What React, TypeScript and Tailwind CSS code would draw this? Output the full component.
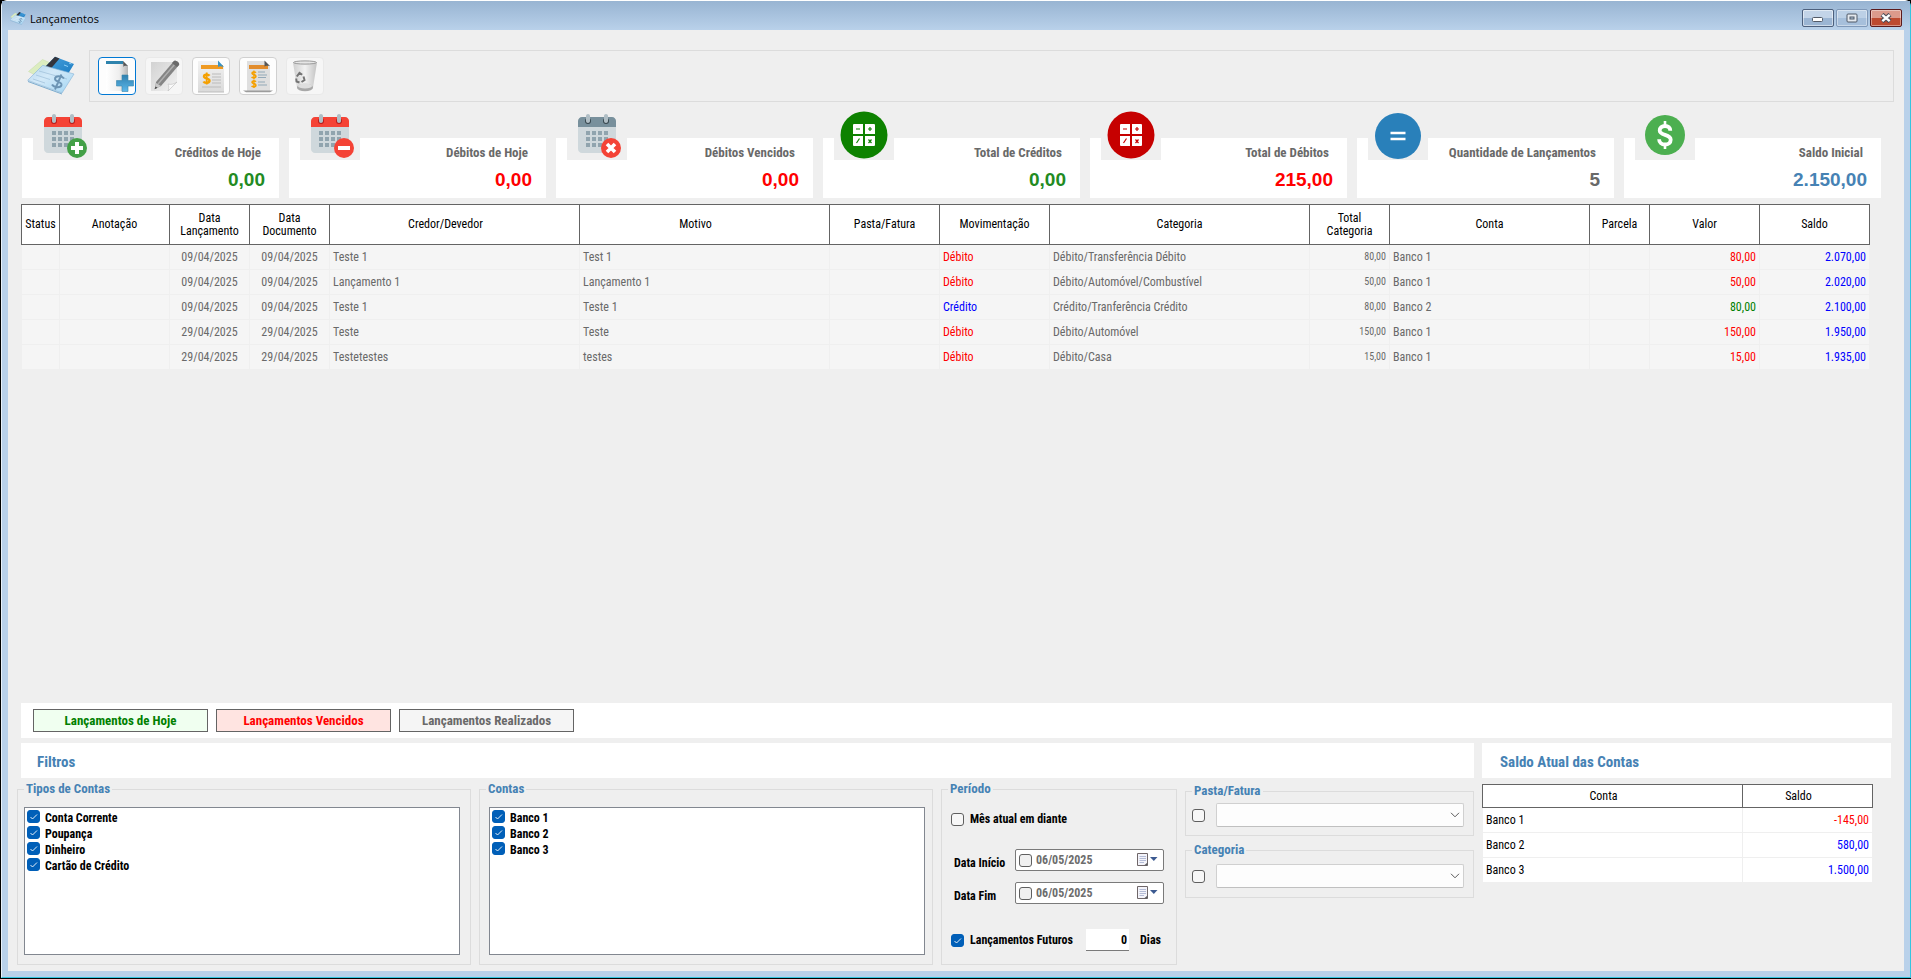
import { useId, type ReactNode } from "react";

const CONDENSED = "font-['Roboto_Condensed','Roboto','Liberation_Sans',sans-serif]";

/* ---------- icons ---------- */

function LogoIcon({ className }: { className: string }) {
  return (
    <svg viewBox="0 0 48 40" className={className} aria-hidden="true">
      <defs>
        <linearGradient id="cheque" x1="0" y1="0" x2="1" y2="1">
          <stop offset="0" stopColor="#b4d6ee" />
          <stop offset="0.4" stopColor="#d3e9f8" />
          <stop offset="0.8" stopColor="#b2dcf5" />
          <stop offset="1" stopColor="#8cc0e4" />
        </linearGradient>
        <linearGradient id="card" x1="0" y1="0" x2="1" y2="1">
          <stop offset="0" stopColor="#4aa3de" />
          <stop offset="1" stopColor="#1c7cc2" />
        </linearGradient>
      </defs>
      <path d="M1.500 15.500 15.500 3.500 28 9 12 21z" fill="#dcedc0" stroke="#c4dba4" strokeWidth="0.5" />
      <path d="M28 .8 47 8 41 18 18 11z" fill="url(#card)" />
      <path d="M18 11 28 .8l4.500 1.700L23.500 13z" fill="#33343c" />
      <path d="M37 9l4 1.500M42 7l2.500 1" stroke="#8fd0f8" strokeWidth="1" />
      <path d="M.7 24.300 15.700 9.300 47 18 35 37z" fill="url(#cheque)" stroke="#86b4d6" strokeWidth="0.6" />
      <path d="M12 15l28 8M9 19l14 4.500M6 23l12 4" stroke="#9dbfd9" strokeWidth="0.7" />
      <path d="M1 25.500l34 12.500" stroke="#5f9cc7" strokeWidth="0.8" />
      <path
        d="M37 22.500c-2-3-9-3-9 .5 0 3 7 2.500 6.500 6-.5 3-7.500 3-9.500-.5M34.500 18.500l-6.500 15"
        fill="none"
        stroke="#6c94b4"
        strokeWidth="1.900"
      />
    </svg>
  );
}

function NewIcon() {
  return (
    <svg viewBox="0 0 36 36" className="size-9" aria-hidden="true">
      <defs>
        <linearGradient id="pg" x1="0" y1="0" x2="1" y2="0">
          <stop offset="0" stopColor="#ffffff" />
          <stop offset="0.6" stopColor="#eeeeee" />
          <stop offset="1" stopColor="#b4b4b4" />
        </linearGradient>
        <linearGradient id="plus" x1="0" y1="0" x2="0" y2="1">
          <stop offset="0" stopColor="#2f7fae" />
          <stop offset="1" stopColor="#5db8ea" />
        </linearGradient>
      </defs>
      <path d="M7 3h17l5 5v25H7z" fill="url(#pg)" />
      <path d="M7 3h17v3H7z" fill="#2e83ad" />
      <path d="M24 3l5 5c-2.500-.5-4-.5-4.500 1z" fill="#555" />
      <path d="M23 17h6v5.500h5.500v5.500H29v5.500h-6V28h-5.500v-5.500H23z" fill="url(#plus)" stroke="#3b86ad" strokeWidth="0.6" />
    </svg>
  );
}

function EditIcon() {
  return (
    <svg viewBox="0 0 36 36" className="size-9" aria-hidden="true">
      <defs>
        <linearGradient id="note" x1="0" y1="0" x2="1" y2="1">
          <stop offset="0" stopColor="#d2d2d2" />
          <stop offset="1" stopColor="#f2f2f2" />
        </linearGradient>
      </defs>
      <path d="M5 4h26v20l-8 9H5z" fill="url(#note)" />
      <path d="M31 24l-9 9c1-3 1-5 0-7 3 1 6 0 9-2z" fill="#fafafa" stroke="#bdbdbd" strokeWidth="0.6" />
      <path d="M28 3c2-1 6 2 5 4L15 28l-6 3 1-7z" fill="#858585" />
      <path d="M29 6L12 26" stroke="#b0b0b0" strokeWidth="1.4" />
      <path d="M28 3c2-1 6 2 5 4l-2 2-5-4z" fill="#6a6a6a" />
      <path d="M10 25l5 3-6 3z" fill="#c9c9c9" />
      <path d="M9.500 28.500l2 1.200-3 1.600z" fill="#444" />
    </svg>
  );
}

function DollarMark({ x, y, s }: { x: number; y: number; s: number }) {
  return (
    <g transform={`translate(${x} ${y}) scale(${s})`} fill="none" stroke="#f5a000" strokeWidth="2.4">
      <path d="M7 3.200C6 1.800 1.500 1.600 1.500 4S7 5.500 7 8.200 2 10.800 1 9" />
      <path d="M4.200 0v12" strokeWidth="1.8" />
    </g>
  );
}

function ReceiptIcon() {
  return (
    <svg viewBox="0 0 36 36" className="size-9" aria-hidden="true">
      <defs>
        <linearGradient id="sheet" x1="0" y1="0" x2="0" y2="1">
          <stop offset="0" stopColor="#f2f2f2" />
          <stop offset="1" stopColor="#dadada" />
        </linearGradient>
      </defs>
      <path d="M5 3h20l6 6v25H5z" fill="url(#sheet)" />
      <path d="M5 34h26" stroke="#bdbdbd" />
      <path d="M8 7h22v4H8z" fill="#ef9a22" />
      <path d="M25 2.500l6 6.500c-3-1-5-1-6 0z" fill="#3a93c4" />
      <DollarMark x={9.500} y={14.500} s={1} />
      <path d="M19 16h9M19 19h9M19 22h9M19 25h9M9 29h19" stroke="#bcbcbc" strokeWidth="1.200" />
    </svg>
  );
}

function StatementIcon() {
  return (
    <svg viewBox="0 0 36 36" className="size-9" aria-hidden="true">
      <path d="M7 3h18l5 5v25H7z" fill="#dfdfdf" />
      <path d="M3 32.500h30l-3 1.800H6z" fill="#9c9c9c" />
      <path d="M9 7h19v4H9z" fill="#e28c2c" />
      <path d="M24.500 2.500L30 8c-3-.5-4.500-.5-5.500.5z" fill="#555" />
      <DollarMark x={11} y={12.500} s={0.7} />
      <DollarMark x={11} y={21.500} s={0.7} />
      <path d="M18 14h7M18 17h9M18 19.500h8M18 24h7M18 27h9" stroke="#94a9b8" strokeWidth="1.100" />
    </svg>
  );
}

function TrashIcon() {
  return (
    <svg viewBox="0 0 36 36" className="size-9" aria-hidden="true">
      <defs>
        <linearGradient id="bin" x1="0" y1="0" x2="1" y2="0">
          <stop offset="0" stopColor="#cfcfcf" />
          <stop offset="0.5" stopColor="#f2f2f2" />
          <stop offset="1" stopColor="#c2c2c2" />
        </linearGradient>
      </defs>
      <path d="M6 4.500l4 25c1 4 15 4 16 0l4-25z" fill="url(#bin)" />
      <ellipse cx="18" cy="4.500" rx="11.500" ry="1.600" fill="#e6e6e6" stroke="#9a9a9a" />
      <ellipse cx="18" cy="29.500" rx="8" ry="3.800" fill="#a8a8a8" />
      <ellipse cx="18" cy="28" rx="7" ry="2.600" fill="#dedede" />
      <path
        d="M9.800 18.500l2.700-3.700 2.700 2M16.500 18.500l1 3.500-3 2M12.500 24.500l-3-1-.3-3"
        fill="none"
        stroke="#747474"
        strokeWidth="2"
      />
    </svg>
  );
}

type Badge = "plus" | "minus" | "cross";

function CalendarIcon({ badge }: { badge: Badge }) {
  const muted = badge === "cross";
  return (
    <svg viewBox="0 0 48 48" className="size-12" aria-hidden="true">
      <path d="M5 38V14h38v24c0 2.200-1.800 4-4 4H9c-2.200 0-4-1.800-4-4z" fill="#cfd8dc" />
      <path d="M43 10v6H5v-6c0-2.200 1.800-4 4-4h30c2.200 0 4 1.800 4 4z" fill={muted ? "#78909c" : "#f44336"} />
      <circle cx="33" cy="10" r="3" fill={muted ? "#37474f" : "#b71c1c"} />
      <circle cx="15" cy="10" r="3" fill={muted ? "#37474f" : "#b71c1c"} />
      <path
        d="M33 3c-1.100 0-2 .9-2 2v5c0 1.100.9 2 2 2s2-.9 2-2V5c0-1.100-.9-2-2-2zM15 3c-1.100 0-2 .9-2 2v5c0 1.100.9 2 2 2s2-.9 2-2V5c0-1.100-.9-2-2-2z"
        fill="#b0bec5"
      />
      <path
        d="M13 20h4v4h-4zM19 20h4v4h-4zM25 20h4v4h-4zM31 20h4v4h-4zM13 26h4v4h-4zM19 26h4v4h-4zM25 26h4v4h-4zM31 26h4v4h-4zM13 32h4v4h-4zM19 32h4v4h-4zM25 32h4v4h-4z"
        fill="#90a4ae"
      />
      <circle cx="38" cy="37" r="10" fill={badge === "plus" ? "#43a047" : "#f44336"} />
      {badge === "plus" && <path d="M36 31h4v4h4v4h-4v4h-4v-4h-4v-4h4z" fill="#fff" />}
      {badge === "minus" && <path d="M32 35h12v4H32z" fill="#fff" />}
      {badge === "cross" && <path d="M34 33l8 8M42 33l-8 8" stroke="#fff" strokeWidth="3.600" />}
    </svg>
  );
}

function CalcIcon({ fill }: { fill: string }) {
  return (
    <svg viewBox="0 0 48 48" className="size-12" aria-hidden="true">
      <circle cx="24" cy="24" r="23.500" fill={fill} />
      <path
        d="M14 13h9v10H13v-9q0-1 1-1zM25 13h9q1 0 1 1v9H25zM13 25h10v10h-9q-1 0-1-1zM25 25h10v9q0 1-1 1h-9z"
        fill="#fff"
      />
      <path
        d="M16 18h4M28 18h4M30 16v4M16.500 32l3-4.500M28.500 28.500l3 3.500M31.500 28.500l-3 3.500"
        stroke={fill}
        strokeWidth="1.200"
      />
    </svg>
  );
}

function EqualsIcon() {
  return (
    <svg viewBox="0 0 48 48" className="size-12" aria-hidden="true">
      <circle cx="24" cy="25" r="23" fill="#2980ba" />
      <path d="M16.500 22h15M16.500 28h15" stroke="#fff" strokeWidth="2.500" />
    </svg>
  );
}

function DollarIcon() {
  return (
    <svg viewBox="0 0 48 48" className="size-12" aria-hidden="true">
      <circle cx="24" cy="24" r="20" fill="#4caf50" />
      <path
        d="M29.300 19.800c0-3-2-4.800-5.300-4.800s-5.300 1.800-5.300 4.500c0 5.400 11 3.400 11 9.200 0 3-2.300 4.800-5.700 4.800s-5.900-2-5.900-5.300"
        fill="none"
        stroke="#fff"
        strokeWidth="3.800"
      />
      <path d="M24 10v5M24 33v5" stroke="#fff" strokeWidth="2.600" />
    </svg>
  );
}

function DropCalendarIcon() {
  return (
    <svg viewBox="0 0 22 14" className="h-3.5 w-[22px]" aria-hidden="true">
      <path d="M.5.500h10v12h-10z" fill="#f4f4fa" stroke="#6f6668" />
      <path d="M2.500 3.500h6.500M2.500 5.500h6.500M2.500 7.500h6.500M2.500 9.500h4.500" stroke="#b4bcd6" />
      <path d="M7 12.500l3.500-3v3z" fill="#5c5c60" />
      <path d="M13 4h7.500l-3.700 4z" fill="#3c5a91" />
    </svg>
  );
}

/* ---------- building blocks ---------- */

function CheckBox({ id, checked, label, tone = "bg-white" }: { id: string; checked?: boolean; label?: string; tone?: string }) {
  return (
    <span className="relative grid size-[13px] shrink-0">
      <input
        id={id}
        type="checkbox"
        aria-label={label}
        defaultChecked={checked}
        className={`peer col-start-1 row-start-1 size-[13px] appearance-none rounded-[3px] border border-[#5f5f5f] ${tone} checked:border-[#005fb8] checked:bg-[#005fb8]`}
      />
      <svg viewBox="0 0 13 13" className="pointer-events-none invisible col-start-1 row-start-1 size-[13px] peer-checked:visible" aria-hidden="true">
        <path d="M3.500 7l2 2 4.500-4.500" fill="none" stroke="#fff" strokeWidth="0.9" />
      </svg>
    </span>
  );
}

function GroupBox({ title, className = "", children }: { title: string; className?: string; children: ReactNode }) {
  return (
    <fieldset className={`min-w-0 border border-[#dcdcdc] ${className}`}>
      <legend className="ml-1.5 px-0.5 text-[13px] leading-4 font-bold text-[#4682b4]">{title}</legend>
      {children}
    </fieldset>
  );
}

function CheckList({ items }: { items: string[] }) {
  const base = useId();
  return (
    <ul className="h-[148px] border border-[#828790] bg-white px-0.5 pt-0.5">
      {items.map((item, i) => (
        <li key={item} className="flex h-4 items-start gap-[5px]">
          <CheckBox id={`${base}-${i}`} checked />
          <label htmlFor={`${base}-${i}`} className="text-xs leading-4 font-bold text-black">
            {item}
          </label>
        </li>
      ))}
    </ul>
  );
}

function DateField({ label }: { label: string }) {
  const id = useId();
  return (
    <div className="flex h-[22px] items-center">
      <label htmlFor={id} className="w-[61px] pt-1.5 text-xs leading-4 font-bold text-black">
        {label}
      </label>
      <div className="flex h-[22px] min-w-0 flex-1 items-center rounded-[2px] border border-[#7a7a7a] bg-white pr-1 pl-[3px]">
        <CheckBox id={`${id}-on`} label={`Usar ${label}`} tone="bg-[#f0f0f0]" />
        <input id={id} defaultValue="06/05/2025" className="ml-1 w-0 min-w-0 flex-1 text-xs leading-4 font-bold text-[#6d6d6d] outline-none" />
        <button type="button" aria-label={`Abrir calendário de ${label}`}>
          <DropCalendarIcon />
        </button>
      </div>
    </div>
  );
}

function ComboGroup({ title, pad }: { title: string; pad: string }) {
  const id = useId();
  return (
    <GroupBox title={title}>
      <div className={`flex items-center gap-[11px] pr-[9px] pl-1.5 ${pad}`}>
        <CheckBox id={id} label={`Filtrar por ${title}`} tone="bg-[#f7f7f7]" />
        <div className="grid min-w-0 flex-1 items-center">
          <select
            aria-label={title}
            className="col-start-1 row-start-1 h-6 w-full appearance-none rounded-[2px] border border-[#d0d0d0] border-b-[#c0c0c0] bg-[#fdfdfd]"
          >
            <option value=""></option>
          </select>
          <svg viewBox="0 0 10 6" className="pointer-events-none col-start-1 row-start-1 mr-1 h-1.5 w-2.5 justify-self-end" aria-hidden="true">
            <path d="M1 .8l4 4 4-4" fill="none" stroke="#5a5a5a" />
          </svg>
        </div>
      </div>
    </GroupBox>
  );
}

/* ---------- data ---------- */

const CARDS: { title: string; value: string; color: string; icon: ReactNode }[] = [
  { title: "Créditos de Hoje", value: "0,00", color: "text-[#228b22]", icon: <CalendarIcon badge="plus" /> },
  { title: "Débitos de Hoje", value: "0,00", color: "text-[#ff0000]", icon: <CalendarIcon badge="minus" /> },
  { title: "Débitos Vencidos", value: "0,00", color: "text-[#ff0000]", icon: <CalendarIcon badge="cross" /> },
  { title: "Total de Créditos", value: "0,00", color: "text-[#228b22]", icon: <CalcIcon fill="#0d8200" /> },
  { title: "Total de Débitos", value: "215,00", color: "text-[#ff0000]", icon: <CalcIcon fill="#c60000" /> },
  { title: "Quantidade de Lançamentos", value: "5", color: "text-[#696969]", icon: <EqualsIcon /> },
  { title: "Saldo Inicial", value: "2.150,00", color: "text-[#4682b4]", icon: <DollarIcon /> },
];

const COLUMNS: { title: string; layout: string }[] = [
  { title: "Status", layout: "w-[38px] px-0" },
  { title: "Anotação", layout: "w-[110px] px-0" },
  { title: "Data Lançamento", layout: "w-[80px] px-2" },
  { title: "Data Documento", layout: "w-[80px] px-2" },
  { title: "Credor/Devedor", layout: "w-[250px] pr-[18px]" },
  { title: "Motivo", layout: "w-[250px] pr-[18px]" },
  { title: "Pasta/Fatura", layout: "w-[110px] px-0" },
  { title: "Movimentação", layout: "w-[110px] px-0" },
  { title: "Categoria", layout: "w-[260px] px-0" },
  { title: "Total Categoria", layout: "w-[80px] px-3" },
  { title: "Conta", layout: "w-[200px] px-0" },
  { title: "Parcela", layout: "w-[60px] px-0" },
  { title: "Valor", layout: "w-[110px] px-0" },
  { title: "Saldo", layout: "w-[110px] px-0" },
];

const ROWS = [
  { date: "09/04/2025", party: "Teste 1", reason: "Test 1", kind: "Débito", category: "Débito/Transferência Débito", total: "80,00", account: "Banco 1", value: "80,00", balance: "2.070,00" },
  { date: "09/04/2025", party: "Lançamento 1", reason: "Lançamento 1", kind: "Débito", category: "Débito/Automóvel/Combustível", total: "50,00", account: "Banco 1", value: "50,00", balance: "2.020,00" },
  { date: "09/04/2025", party: "Teste 1", reason: "Teste 1", kind: "Crédito", category: "Crédito/Tranferência Crédito", total: "80,00", account: "Banco 2", value: "80,00", balance: "2.100,00" },
  { date: "29/04/2025", party: "Teste", reason: "Teste", kind: "Débito", category: "Débito/Automóvel", total: "150,00", account: "Banco 1", value: "150,00", balance: "1.950,00" },
  { date: "29/04/2025", party: "Testetestes", reason: "testes", kind: "Débito", category: "Débito/Casa", total: "15,00", account: "Banco 1", value: "15,00", balance: "1.935,00" },
];

const BALANCES = [
  { account: "Banco 1", value: "-145,00", color: "text-[#ff0000]" },
  { account: "Banco 2", value: "580,00", color: "text-[#0000ff]" },
  { account: "Banco 3", value: "1.500,00", color: "text-[#0000ff]" },
];

const TOOLS: { label: string; icon: ReactNode; style: string; disabled?: boolean }[] = [
  { label: "Novo", icon: <NewIcon />, style: "border-[#0078d4] bg-[#fdfdfd]" },
  { label: "Editar", icon: <EditIcon />, style: "border-[#e9e9e9] bg-[#f6f6f6]", disabled: true },
  { label: "Recibo", icon: <ReceiptIcon />, style: "border-[#d0d0d0] bg-[#fdfdfd]" },
  { label: "Extrato", icon: <StatementIcon />, style: "border-[#d0d0d0] bg-[#fdfdfd]" },
  { label: "Excluir", icon: <TrashIcon />, style: "border-[#e9e9e9] bg-[#f6f6f6]", disabled: true },
];

/* ---------- sections ---------- */

function TitleBar() {
  return (
    <header className="flex h-[29px] items-start bg-linear-to-b from-[#98b4d2] to-[#b9d1ea] pr-2 pl-2">
      <LogoIcon className="mt-2.5 mr-1 h-[15px] w-4" />
      <h1 className="mt-2 flex-1 font-['Open_Sans','Noto_Sans',sans-serif] text-[11px] leading-5 text-black">Lançamentos</h1>
      <div className="mt-2 flex gap-0.5">
        <button
          type="button"
          aria-label="Minimizar"
          className="grid h-[18px] w-8 place-items-center rounded-[2px] border border-[#4d607d] bg-linear-to-b from-[#c3d4e8] from-50% to-[#9bb5d3] to-50% inset-ring inset-ring-white/50"
        >
          <svg viewBox="0 0 12 6" className="mt-1 h-1.5 w-3" aria-hidden="true">
            <rect x="0.5" y="0.5" width="10" height="4" rx="1" fill="#fff" stroke="#535b68" />
          </svg>
        </button>
        <button
          type="button"
          aria-label="Maximizar"
          className="grid h-[18px] w-8 place-items-center rounded-[2px] border border-[#7f98b8] bg-linear-to-b from-[#bcd0e6] from-50% to-[#a6bfdb] to-50% inset-ring inset-ring-white/40"
        >
          <svg viewBox="0 0 12 10" className="h-2.5 w-3" aria-hidden="true">
            <rect x="1" y="1" width="10" height="8" rx="1" fill="#e4e9ef" stroke="#4e5866" />
            <rect x="4" y="4" width="4" height="2" fill="#b4c8de" stroke="#4e5866" />
          </svg>
        </button>
        <button
          type="button"
          aria-label="Fechar"
          className="grid h-[18px] w-8 place-items-center rounded-[2px] border border-[#5b1a1c] bg-linear-to-b from-[#dc9a8c] from-50% to-[#bd4a30] to-50% inset-ring inset-ring-white/40"
        >
          <svg viewBox="0 0 12 10" className="h-2.5 w-3" aria-hidden="true">
            <path d="M2 1.500l8 7M10 1.500l-8 7" stroke="#4c4c58" strokeWidth="4.400" />
            <path d="M2.300 1.800l7.400 6.400M9.700 1.800L2.300 8.200" stroke="#fff" strokeWidth="2.400" />
          </svg>
        </button>
      </div>
    </header>
  );
}

function EntriesTable() {
  const cell = "h-[25px] border border-[#efefef] px-[3px] py-0 leading-4 whitespace-nowrap";
  return (
    <table className="w-full table-fixed border-collapse bg-[#f5f5f5] text-xs text-[#696969]">
      <thead>
        <tr className="h-10 bg-white text-black">
          {COLUMNS.map((c) => (
            <th key={c.title} scope="col" className={`border border-[#646464] py-0 text-center leading-[13px] font-normal ${c.layout}`}>
              {c.title}
            </th>
          ))}
        </tr>
      </thead>
      <tbody>
        {ROWS.map((r, i) => (
          <tr key={i}>
            <td className={cell} />
            <td className={cell} />
            <td className={`${cell} text-center`}>{r.date}</td>
            <td className={`${cell} text-center`}>{r.date}</td>
            <td className={cell}>{r.party}</td>
            <td className={cell}>{r.reason}</td>
            <td className={cell} />
            <td className={`${cell} ${r.kind === "Débito" ? "text-[#ff0000]" : "text-[#0000ff]"}`}>{r.kind}</td>
            <td className={cell}>{r.category}</td>
            <td className={`${cell} text-right text-[10px]`}>{r.total}</td>
            <td className={cell}>{r.account}</td>
            <td className={cell} />
            <td className={`${cell} text-right ${r.kind === "Débito" ? "text-[#ff0000]" : "text-[#008000]"}`}>{r.value}</td>
            <td className={`${cell} text-right text-[#0000ff]`}>{r.balance}</td>
          </tr>
        ))}
      </tbody>
    </table>
  );
}

function BalanceTable() {
  return (
    <table className="w-full table-fixed border-collapse bg-white text-xs text-black">
      <thead>
        <tr className="h-[23px]">
          <th scope="col" className="w-[260px] border border-[#646464] py-0 pr-[18px] leading-4 font-normal">Conta</th>
          <th scope="col" className="w-[130px] border border-[#646464] py-0 pr-[18px] leading-4 font-normal">Saldo</th>
        </tr>
      </thead>
      <tbody>
        {BALANCES.map((b) => (
          <tr key={b.account} className="h-[25px]">
            <td className="border border-[#efefef] px-[3px] py-0 leading-4">{b.account}</td>
            <td className={`border border-[#efefef] px-[3px] py-0 text-right leading-4 ${b.color}`}>{b.value}</td>
          </tr>
        ))}
      </tbody>
    </table>
  );
}

export default function App() {
  const monthId = useId();
  const futureId = useId();
  const daysId = useId();
  return (
    <div className={`flex min-h-screen flex-col bg-black pb-px pl-px ${CONDENSED}`}>
      <div className="flex flex-1 flex-col rounded-t-md border border-[#35c5e0] border-t-white border-l-[#e8f1fa] bg-[#b9d1ea]">
        <TitleBar />
        <main className="mr-1.5 mb-1.5 ml-1.5 flex flex-1 flex-col bg-[#efefef] pt-5 pb-1.5">
          <div className="flex items-center pr-2.5 pl-[19px]">
            <LogoIcon className="mr-3.5 h-10 w-12 shrink-0" />
            <div role="toolbar" aria-label="Ações" className="flex h-[52px] flex-1 items-center gap-[9px] border border-[#dcdcdc] px-2">
              {TOOLS.map((t) => (
                <button
                  key={t.label}
                  type="button"
                  aria-label={t.label}
                  disabled={t.disabled}
                  className={`grid size-[38px] place-items-center rounded-[4px] border ${t.style}`}
                >
                  {t.icon}
                </button>
              ))}
            </div>
          </div>

          <section className="mt-9 mr-[23px] ml-3.5 grid grid-cols-7 gap-2.5">
            {CARDS.map((c) => (
              <article key={c.title} className="flex h-[60px] items-start bg-white pr-3.5 pl-[11px]">
                <div className="-mt-7 grid h-[50px] w-[60px] shrink-0 place-items-center bg-[#efefef]">{c.icon}</div>
                <div className="min-w-0 flex-1 text-right font-bold">
                  <h2 className="pt-1.5 pr-1 text-[13px] leading-[18px] whitespace-nowrap text-[#696969]">{c.title}</h2>
                  <p className={`mt-1.5 font-['Liberation_Sans',sans-serif] text-[19px] leading-6 ${c.color}`}>{c.value}</p>
                </div>
              </article>
            ))}
          </section>

          <section className="mt-1.5 mr-[34px] ml-[13px] flex-1">
            <EntriesTable />
          </section>

          <section className="mr-3 ml-[13px] flex h-[35px] items-center gap-2 bg-white pl-3 text-[13px] font-bold">
            <button type="button" className="h-[23px] w-[175px] border border-[#646464] bg-[#f0fff0] leading-4 text-[#008000]">
              Lançamentos de Hoje
            </button>
            <button type="button" className="h-[23px] w-[175px] border border-[#646464] bg-[#ffe4e1] leading-4 text-[#ff0000]">
              Lançamentos Vencidos
            </button>
            <button type="button" className="h-[23px] w-[175px] border border-[#646464] bg-[#f5f5f5] leading-4 text-[#696969]">
              Lançamentos Realizados
            </button>
          </section>

          <div className="mt-[5px] mr-[13px] ml-[9px] grid grid-cols-[1457fr_409fr] gap-2">
            <section className="min-w-0">
              <h2 className="ml-1 h-[35px] bg-white pl-4 text-[15px] leading-[38px] font-bold text-[#4682b4]">Filtros</h2>
              <div className="mt-[3px] grid grid-cols-[454fr_454fr_236fr_289fr] items-start gap-2">
                <GroupBox title="Tipos de Contas" className="pb-[9px]">
                  <div className="mt-2.5 mr-2.5 ml-1.5">
                    <CheckList items={["Conta Corrente", "Poupança", "Dinheiro", "Cartão de Crédito"]} />
                  </div>
                </GroupBox>
                <GroupBox title="Contas" className="pb-[9px]">
                  <div className="mt-2.5 mr-[7px] ml-[9px]">
                    <CheckList items={["Banco 1", "Banco 2", "Banco 3"]} />
                  </div>
                </GroupBox>
                <GroupBox title="Período" className="h-[184px]">
                  <div className="flex flex-col pr-3 pl-[9px]">
                    <div className="mt-3.5 mb-[22px] flex h-4 items-center gap-1.5">
                      <CheckBox id={monthId} tone="bg-[#f7f7f7]" />
                      <label htmlFor={monthId} className="text-xs leading-4 font-bold text-black">Mês atual em diante</label>
                    </div>
                    <div className="flex flex-col gap-[11px] pl-[3px]">
                      <DateField label="Data Início" />
                      <DateField label="Data Fim" />
                    </div>
                    <div className="mt-[25px] flex h-[22px] items-center">
                      <CheckBox id={futureId} checked />
                      <label htmlFor={futureId} className="ml-1.5 flex-1 text-xs leading-4 font-bold whitespace-nowrap text-black">
                        Lançamentos Futuros
                      </label>
                      <input
                        id={daysId}
                        defaultValue="0"
                        className="h-[22px] w-[43px] border-b border-[#7a7a7a] bg-white pr-0.5 text-right text-xs font-bold text-black"
                      />
                      <label htmlFor={daysId} className="mr-[3px] ml-[11px] text-xs leading-4 font-bold text-black">Dias</label>
                    </div>
                  </div>
                </GroupBox>
                <div className="mt-0.5 flex flex-col gap-1.5">
                  <ComboGroup title="Pasta/Fatura" pad="pt-1 pb-2" />
                  <ComboGroup title="Categoria" pad="pt-1.5 pb-[9px]" />
                </div>
              </div>
            </section>

            <section className="min-w-0">
              <h2 className="h-[35px] bg-white pl-[18px] text-[15px] leading-[38px] font-bold text-[#4682b4]">Saldo Atual das Contas</h2>
              <div className="mt-1.5 mr-[18px]">
                <BalanceTable />
              </div>
            </section>
          </div>
        </main>
      </div>
    </div>
  );
}
